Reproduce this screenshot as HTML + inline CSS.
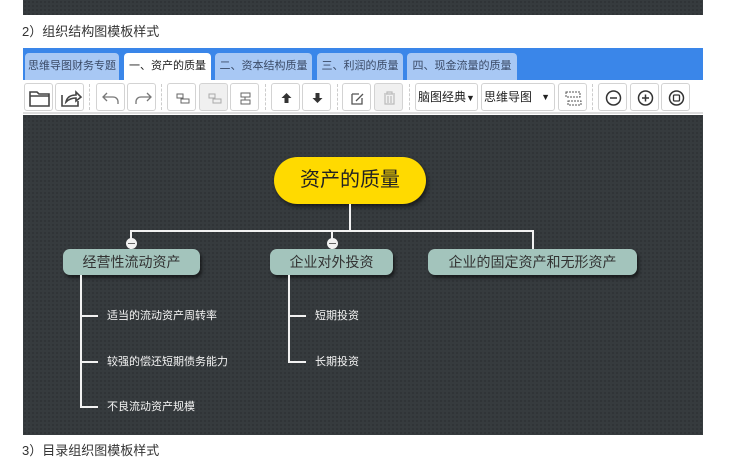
<!DOCTYPE html>
<html><head><meta charset="utf-8"><style>
*{margin:0;padding:0;box-sizing:border-box}
body{width:750px;height:457px;background:#fff;position:relative;overflow:hidden;font-family:"Liberation Sans","Noto Sans CJK SC",sans-serif}
.a{position:absolute}
.cv{background-color:#363b3e;background-image:radial-gradient(#2e3235 0.8px,transparent 0.9px);background-size:4px 4px}
.tab{position:absolute;top:53px;height:27px;background:#a8c8f4;border-radius:4px 4px 0 0;font-size:11px;color:#3a4a66;line-height:27px;text-align:center;white-space:nowrap;overflow:hidden}
.btn{position:absolute;top:83px;width:29px;height:28px;border:1px solid #d3d3d3;border-radius:3px;background:#fff}
.btn.d{background:#f0f0f0}
.sep{position:absolute;top:84px;height:26px;border-left:1px dashed #ccc}
.node{position:absolute;height:26px;background:#a3c4bc;border-radius:7px;font-size:14px;color:#333;line-height:26px;text-align:center;box-shadow:2px 3px 3px rgba(0,0,0,.5)}
.ln{position:absolute;background:#f2f2f2}
.ct{position:absolute;font-size:11px;color:#f4f4f4;line-height:14px}
</style></head><body>
<div class="a cv" style="left:23px;top:0;width:680px;height:15px"></div>
<div class="a" style="left:22px;top:23px;font-size:13px;color:#333;line-height:18px">2）组织结构图模板样式</div>
<div class="a" style="left:23px;top:48px;width:680px;height:33px;background:#3a86e9"></div>
<div class="tab" style="left:25px;width:94px">思维导图财务专题</div>
<div class="tab" style="left:124px;width:87px;background:#fff;color:#222">一、资产的质量</div>
<div class="tab" style="left:215px;width:97px">二、资本结构质量</div>
<div class="tab" style="left:317px;width:86px">三、利润的质量</div>
<div class="tab" style="left:407px;width:110px">四、现金流量的质量</div>
<div class="a" style="left:23px;top:80px;width:680px;height:34px;background:#fff;border-bottom:2px solid #ddd"></div>
<div class="btn" style="left:24px"><svg width="29" height="28"><path d="M5 8h7l2 2h10v12H5z M5 12h19" fill="none" stroke="#444" stroke-width="1.6"/></svg></div>
<div class="btn" style="left:55px"><svg width="29" height="28"><path d="M6 11v11h16v-5 M10 18c1-5 5-7 10-7v-3l5 5-5 4v-3c-4 0-7 1-10 4z" fill="none" stroke="#444" stroke-width="1.6"/></svg></div>
<div class="sep" style="left:89px"></div>
<div class="btn" style="left:96px"><svg width="29" height="28"><path d="M10 9l-4 4 4 4 M6 13h10c3 0 5 2 5 5v2" fill="none" stroke="#777" stroke-width="1.3"/></svg></div>
<div class="btn" style="left:127px"><svg width="29" height="28"><path d="M19 9l4 4-4 4 M23 13H13c-3 0-5 2-5 5v2" fill="none" stroke="#777" stroke-width="1.3"/></svg></div>
<div class="sep" style="left:161px"></div>
<div class="btn" style="left:167px"><svg width="29" height="28"><path d="M9 10h6v4H9z M13 15h8v4h-8z" fill="none" stroke="#666" stroke-width="1"/></svg></div>
<div class="btn d" style="left:199px"><svg width="29" height="28"><path d="M9 10h6v4H9z M13 15h8v4h-8z" fill="none" stroke="#aaa" stroke-width="1"/></svg></div>
<div class="btn" style="left:230px"><svg width="29" height="28"><path d="M10 9h9v4h-9z M10 16h9v4h-9z M14 13v3" fill="none" stroke="#666" stroke-width="1"/></svg></div>
<div class="sep" style="left:265px"></div>
<div class="btn" style="left:271px"><svg width="29" height="28"><path d="M14.5 9l5 5h-3v5h-4v-5h-3z" fill="#333"/></svg></div>
<div class="btn" style="left:302px"><svg width="29" height="28"><path d="M14.5 19l5-5h-3V9h-4v5h-3z" fill="#333"/></svg></div>
<div class="sep" style="left:337px"></div>
<div class="btn" style="left:342px"><svg width="29" height="28"><path d="M9 10h7 M9 10v10h10v-6 M13 17l7-7" fill="none" stroke="#555" stroke-width="1.3"/></svg></div>
<div class="btn d" style="left:374px"><svg width="29" height="28"><path d="M9 10h11 M12 10v-2h5v2 M10 11v9h9v-9 M13 12v7 M16 12v7" fill="none" stroke="#bbb" stroke-width="1.2"/></svg></div>
<div class="sep" style="left:409px"></div>
<div class="btn" style="left:415px;width:63px;font-size:12px;line-height:26px;padding-left:2px;color:#222">脑图经典<span style="font-size:9px">▼</span></div>
<div class="btn" style="left:481px;width:74px;font-size:12px;line-height:26px;padding-left:2px;color:#222">思维导图<span style="position:absolute;right:4px;font-size:9px">▼</span></div>
<div class="btn" style="left:558px"><svg width="29" height="28"><path d="M7 8h14v5H7z M9 17h13v4H9z" fill="none" stroke="#555" stroke-width="1" stroke-dasharray="2 1"/></svg></div>
<div class="sep" style="left:592px"></div>
<div class="btn" style="left:598px"><svg width="29" height="28"><circle cx="14.5" cy="14" r="7" fill="none" stroke="#333" stroke-width="1.5"/><path d="M11 14h7" stroke="#333" stroke-width="1.5"/></svg></div>
<div class="btn" style="left:630px"><svg width="29" height="28"><circle cx="14.5" cy="14" r="7" fill="none" stroke="#333" stroke-width="1.5"/><path d="M11 14h7M14.5 10.5v7" stroke="#333" stroke-width="1.5"/></svg></div>
<div class="btn" style="left:661px"><svg width="29" height="28"><circle cx="14.5" cy="14" r="7" fill="none" stroke="#333" stroke-width="1.5"/><rect x="11.5" y="11" width="6" height="6" rx="1" fill="none" stroke="#333" stroke-width="1.3"/></svg></div>
<div class="a cv" style="left:23px;top:115px;width:680px;height:320px"></div>
<div class="a" style="left:274px;top:157px;width:152px;height:47px;background:#ffda00;border-radius:24px;font-size:20px;line-height:47px;text-align:center;color:#222;box-shadow:2px 3px 4px rgba(0,0,0,.5)">资产的质量</div>
<div class="ln" style="left:349px;top:204px;width:2px;height:28px"></div>
<div class="ln" style="left:130px;top:230px;width:404px;height:2px"></div>
<div class="ln" style="left:130px;top:230px;width:2px;height:19px"></div>
<div class="ln" style="left:331px;top:230px;width:2px;height:19px"></div>
<div class="ln" style="left:532px;top:230px;width:2px;height:19px"></div>
<div class="a" style="left:126px;top:238px;width:11px;height:11px;border-radius:50%;background:#f2f2f2"><div style="margin:5px 2px;height:1px;background:#666"></div></div>
<div class="a" style="left:327px;top:238px;width:11px;height:11px;border-radius:50%;background:#f2f2f2"><div style="margin:5px 2px;height:1px;background:#666"></div></div>
<div class="node" style="left:63px;top:249px;width:137px">经营性流动资产</div>
<div class="node" style="left:270px;top:249px;width:123px">企业对外投资</div>
<div class="node" style="left:428px;top:249px;width:209px">企业的固定资产和无形资产</div>
<div class="ln" style="left:80px;top:275px;width:2px;height:133px"></div>
<div class="ln" style="left:80px;top:315px;width:18px;height:2px"></div>
<div class="ln" style="left:80px;top:361px;width:18px;height:2px"></div>
<div class="ln" style="left:80px;top:406px;width:18px;height:2px"></div>
<div class="ct" style="left:107px;top:309px">适当的流动资产周转率</div>
<div class="ct" style="left:107px;top:355px">较强的偿还短期债务能力</div>
<div class="ct" style="left:107px;top:400px">不良流动资产规模</div>
<div class="ln" style="left:288px;top:275px;width:2px;height:88px"></div>
<div class="ln" style="left:288px;top:315px;width:18px;height:2px"></div>
<div class="ln" style="left:288px;top:361px;width:18px;height:2px"></div>
<div class="ct" style="left:315px;top:309px">短期投资</div>
<div class="ct" style="left:315px;top:355px">长期投资</div>
<div class="a" style="left:22px;top:442px;font-size:13px;color:#333;line-height:18px">3）目录组织图模板样式</div>
</body></html>
